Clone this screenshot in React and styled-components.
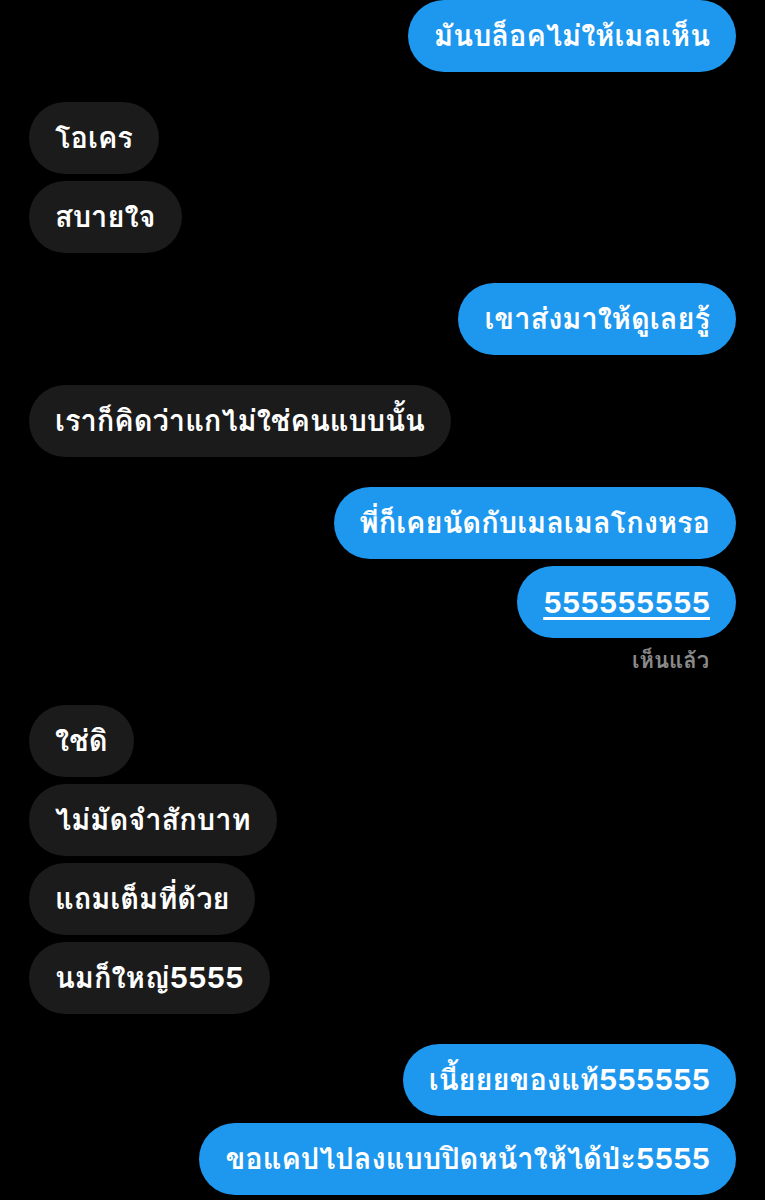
import React from "react";
import styled, { createGlobalStyle } from "styled-components";

const GlobalStyle = createGlobalStyle`
  html, body {
    margin: 0;
    padding: 0;
    background: #000;
  }
  body {
    font-family: Inter, "Waree", "Loma", "Garuda", "Noto Sans Thai Looped", "Noto Sans Thai", sans-serif;
    -webkit-font-smoothing: antialiased;
  }
`;

const Thread = styled.div`
  width: 765px;
  min-height: 1200px;
  box-sizing: border-box;
  padding: 0 29px;
  background: #000;
  display: flex;
  flex-direction: column;
  gap: 30px;
`;

const Group = styled.div`
  display: flex;
  flex-direction: column;
  align-items: ${(p) => (p.$mine ? "flex-end" : "flex-start")};
  gap: 7px;
`;

const Bubble = styled.div`
  box-sizing: border-box;
  height: 72px;
  padding: 0 26px;
  display: flex;
  align-items: center;
  border-radius: 36px;
  background: ${(p) => (p.$mine ? "#1e97ef" : "#1b1b1b")};
  color: #fff;
  font-size: 29px;
  font-weight: 700;
  white-space: nowrap;
`;

const Link = styled.span`
  text-decoration: underline;
  text-underline-offset: 4px;
  text-decoration-thickness: 3px;
`;

const Seen = styled.div`
  height: 30px;
  line-height: 30px;
  margin-right: 27px;
  color: #8a8a8a;
  font-size: 22px;
  font-weight: 700;
`;

const groups = [
  { mine: true, msgs: ["มันบล็อคไม่ให้เมลเห็น"] },
  { mine: false, msgs: ["โอเคร", "สบายใจ"] },
  { mine: true, msgs: ["เขาส่งมาให้ดูเลยรู้"] },
  { mine: false, msgs: ["เราก็คิดว่าแกไม่ใช่คนแบบนั้น"] },
  { mine: true, msgs: ["พี่ก็เคยนัดกับเมลเมลโกงหรอ", { link: "555555555" }], seen: "เห็นแล้ว" },
  { mine: false, msgs: ["ใช่ดิ", "ไม่มัดจำสักบาท", "แถมเต็มที่ด้วย", "นมก็ใหญ่5555"] },
  { mine: true, msgs: ["เนี้ยยยของแท้555555", "ขอแคปไปลงแบบปิดหน้าให้ได้ป่ะ5555"] },
];

export default function App() {
  return (
    <>
      <GlobalStyle />
      <Thread>
        {groups.map((g, i) => (
          <Group key={i} $mine={g.mine}>
            {g.msgs.map((m, j) => (
              <Bubble key={j} $mine={g.mine}>
                {typeof m === "string" ? m : <Link>{m.link}</Link>}
              </Bubble>
            ))}
            {g.seen && <Seen>{g.seen}</Seen>}
          </Group>
        ))}
      </Thread>
    </>
  );
}
